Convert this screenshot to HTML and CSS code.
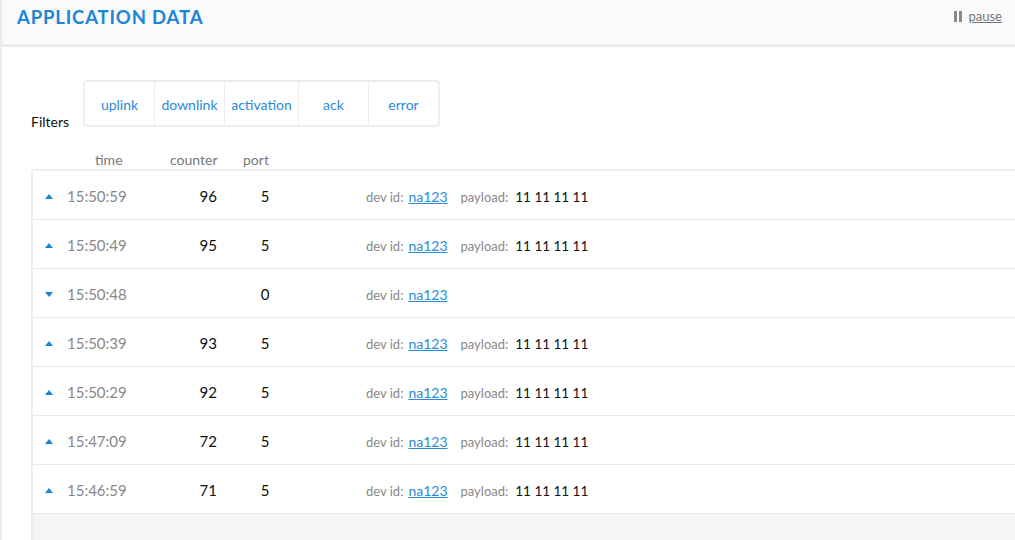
FILE: index.html
```html
<!DOCTYPE html>
<html>
<head>
<meta charset="utf-8">
<link rel="stylesheet" href="styles.css">
</head>
<body>
<div class="page">
  <header class="topbar">
    <h1 class="title">APPLICATION DATA</h1>
    <div class="pause">
      <svg class="pause-icon" width="8" height="11" viewBox="0 0 8 11"><rect x="0" y="0" width="3" height="11" fill="#8a8a8a"/><rect x="5" y="0" width="3" height="11" fill="#8a8a8a"/></svg>
      <a class="pause-link" href="#">pause</a>
    </div>
  </header>
  <main class="content">
    <div class="filters">
      <span class="filters-label">Filters</span>
      <div class="filter-group">
        <span class="filter f-uplink">uplink</span>
        <span class="filter f-downlink">downlink</span>
        <span class="filter f-activation">activation</span>
        <span class="filter f-ack">ack</span>
        <span class="filter f-error">error</span>
      </div>
    </div>
    <div class="col-heads">
      <span class="h-time">time</span>
      <span class="h-counter">counter</span>
      <span class="h-port">port</span>
    </div>
    <div class="table">
      <div class="row">
        <span class="arrow up"></span><span class="time">15:50:59</span><span class="counter">96</span><span class="port">5</span>
        <span class="meta"><span class="label">dev id:</span><a class="dev" href="#">na123</a><span class="label pl">payload:</span><span class="payload">11 11 11 11</span></span>
      </div>
      <div class="row">
        <span class="arrow up"></span><span class="time">15:50:49</span><span class="counter">95</span><span class="port">5</span>
        <span class="meta"><span class="label">dev id:</span><a class="dev" href="#">na123</a><span class="label pl">payload:</span><span class="payload">11 11 11 11</span></span>
      </div>
      <div class="row">
        <span class="arrow down"></span><span class="time">15:50:48</span><span class="counter"></span><span class="port">0</span>
        <span class="meta"><span class="label">dev id:</span><a class="dev" href="#">na123</a></span>
      </div>
      <div class="row">
        <span class="arrow up"></span><span class="time">15:50:39</span><span class="counter">93</span><span class="port">5</span>
        <span class="meta"><span class="label">dev id:</span><a class="dev" href="#">na123</a><span class="label pl">payload:</span><span class="payload">11 11 11 11</span></span>
      </div>
      <div class="row">
        <span class="arrow up"></span><span class="time">15:50:29</span><span class="counter">92</span><span class="port">5</span>
        <span class="meta"><span class="label">dev id:</span><a class="dev" href="#">na123</a><span class="label pl">payload:</span><span class="payload">11 11 11 11</span></span>
      </div>
      <div class="row">
        <span class="arrow up"></span><span class="time">15:47:09</span><span class="counter">72</span><span class="port">5</span>
        <span class="meta"><span class="label">dev id:</span><a class="dev" href="#">na123</a><span class="label pl">payload:</span><span class="payload">11 11 11 11</span></span>
      </div>
      <div class="row">
        <span class="arrow up"></span><span class="time">15:46:59</span><span class="counter">71</span><span class="port">5</span>
        <span class="meta"><span class="label">dev id:</span><a class="dev" href="#">na123</a><span class="label pl">payload:</span><span class="payload">11 11 11 11</span></span>
      </div>
    </div>
  </main>
</div>
</body>
</html>
```
FILE: styles.css
```css
* { box-sizing: border-box; }
html, body { margin: 0; padding: 0; }
body {
  font-family: Lato, "Open Sans", sans-serif;
  background: #fff;
  width: 1015px;
  height: 540px;
  overflow: hidden;
}
.page {
  border-left: 2px solid #ececec;
  height: 540px;
  overflow: hidden;
}
.topbar {
  height: 47px;
  background: #fafafa;
  border-bottom: 3px solid #ececec;
  display: flex;
  align-items: flex-start;
  justify-content: space-between;
  padding: 0 13px 0 15px;
}
.title {
  margin: 6px 0 0 0;
  font-size: 18.5px;
  font-weight: 700;
  letter-spacing: 0.85px;
  color: #1b86d8;
  line-height: 22px;
}
.pause {
  display: flex;
  align-items: center;
  gap: 7px;
  margin-top: 10px;
}
.pause-link {
  font-size: 13px;
  color: #777;
  text-decoration: underline;
  line-height: 13px;
}
.content {
  padding-left: 29px;
}
.filters {
  display: flex;
  align-items: flex-end;
  margin-top: 33px;
}
.filters-label {
  font-size: 14px;
  color: #111;
  line-height: 16px;
  margin-bottom: -3px;
  width: 52px;
}
.filter-group {
  display: flex;
  height: 47px;
  border: 2px solid #eeeeee;
  border-radius: 4px;
}
.filter {
  display: flex;
  align-items: center;
  justify-content: center;
  font-size: 14px;
  color: #2a8ad8;
  border-right: 1px solid #eeeeee;
  padding-top: 2px;
}
.filter:last-child { border-right: none; }
.f-uplink { width: 70px; }
.f-downlink { width: 70px; }
.f-activation { width: 74px; }
.f-ack { width: 70px; }
.f-error { width: 69px; }
.col-heads {
  display: flex;
  height: 42px;
  align-items: flex-end;
  padding-bottom: 1px;
  font-size: 14px;
  color: #777;
  line-height: 16px;
}
.h-time { margin-left: 64px; width: 75px; }
.h-counter { width: 73px; }
.table {
  border-left: 2px solid #eeeeee;
  border-top: 2px solid #eeeeee;
  border-top-left-radius: 4px;
  background: #f5f5f5;
  height: 400px;
}
.row {
  display: flex;
  align-items: center;
  height: 49px;
  background: #fff;
  border-bottom: 1px solid #e9e9e9;
  padding-left: 12px;
  padding-top: 2px;
}
.arrow {
  width: 22px;
  display: flex;
  align-items: center;
}
.arrow::before {
  content: "";
  display: block;
  width: 0;
  height: 0;
  border-left: 4.5px solid transparent;
  border-right: 4.5px solid transparent;
}
.arrow.up::before { border-bottom: 5px solid #1a85d6; }
.arrow.down::before { border-top: 5px solid #1a85d6; }
.time {
  width: 100px;
  font-size: 15px;
  color: #888;
}
.counter {
  width: 50px;
  text-align: right;
  font-size: 15px;
  color: #111;
}
.port {
  width: 96px;
  text-align: center;
  font-size: 15px;
  color: #111;
}
.meta {
  margin-left: 53px;
  display: flex;
  align-items: baseline;
  font-size: 13px;
}
.label { color: #888; }
.dev {
  color: #2a8ad8;
  text-decoration: underline;
  font-size: 14px;
  margin-left: 5px;
}
.pl { margin-left: 13px; }
.payload {
  color: #111;
  font-size: 13.5px;
  margin-left: 7px;
}
```
